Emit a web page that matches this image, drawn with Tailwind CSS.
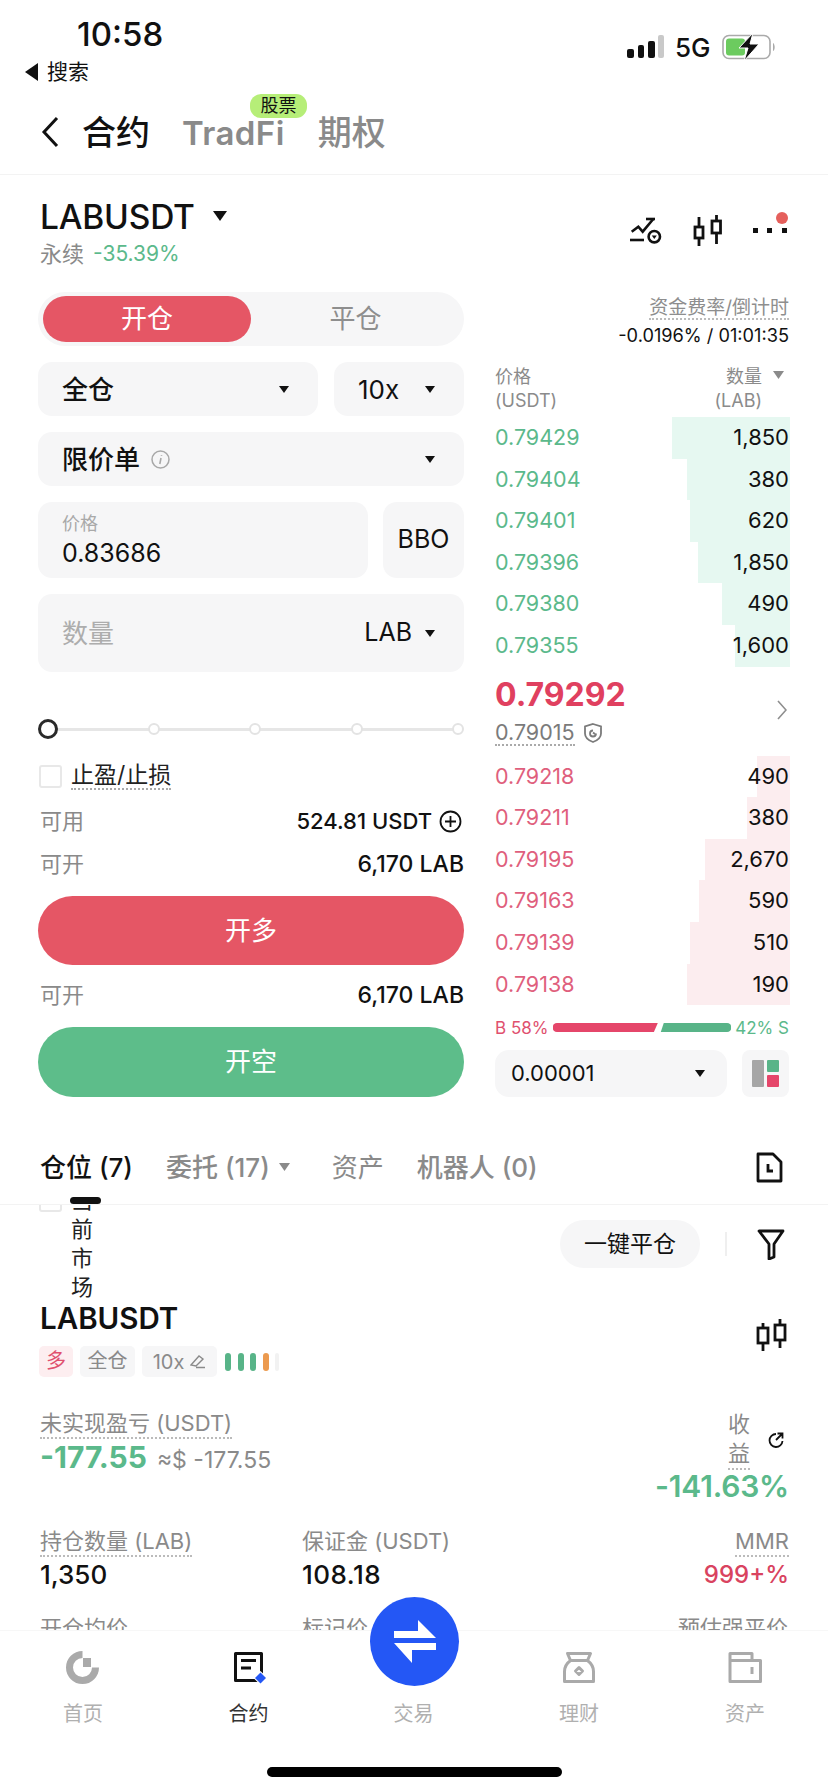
<!DOCTYPE html>
<html lang="zh">
<head>
  <meta charset="UTF-8">
  <title>合约 - LABUSDT</title>
  <script src="https://cdn.jsdelivr.net/npm/@tailwindcss/browser@4"></script>
</head>
<body class="bg-white">
<div class="relative w-[828px] h-[1792px] overflow-hidden bg-white text-[#111] [font-family:Inter,'Noto_Sans_CJK_SC',sans-serif]">

  <!-- Status bar -->
  <div class="relative h-[90px] shrink-0">
    <div class="absolute left-[77px] top-[16px] text-[33px] leading-[36px] font-medium">10:58</div>
    <div class="absolute left-[25px] top-[60px] flex items-center gap-[9px] text-[21px] leading-[24px]">
      <svg class="w-[13px] h-[18px]" viewBox="0 0 13 18"><path d="M13 0v18L0 9z" fill="#111"/></svg>
      <span>搜索</span>
    </div>
    <div class="absolute left-[627px] top-[35px] flex items-end gap-[3.5px] h-[23px]">
      <i class="block w-[7px] h-[9px] rounded-[2px] bg-[#111]"></i>
      <i class="block w-[6.5px] h-[13px] rounded-[2px] bg-[#111]"></i>
      <i class="block w-[7px] h-[17px] rounded-[2px] bg-[#111]"></i>
      <i class="block w-[5.5px] h-[23px] rounded-[2px] bg-[#c9c9c9]"></i>
    </div>
    <div class="absolute left-[675px] top-[32px] text-[26px] leading-[32px] font-medium">5G</div>
    <svg class="absolute left-[722px] top-[33px] w-[54px] h-[28px]" viewBox="0 0 54 28">
      <rect x="1" y="2.5" width="47" height="23" rx="6" fill="none" stroke="#aaa" stroke-width="1.6"/>
      <rect x="4" y="5.5" width="19" height="17" rx="3" fill="#6ccb5f"/>
      <path d="M51 10c2 1 2.500 7 0 8z" fill="#aaa"/>
      <path d="M31 0L17 15h9l-4 13 15-17h-9z" fill="#111" stroke="#fff" stroke-width="1"/>
    </svg>
  </div>

  <!-- Nav -->
  <div class="relative flex items-center h-[85px] pl-[40px] pt-[2px] border-b border-[#f3f3f3]">
    <svg class="w-[20px] h-[34px] mb-[2px]" viewBox="0 0 20 34"><path d="M17 3L4 17l13 14" fill="none" stroke="#111" stroke-width="3"/></svg>
    <span class="ml-[22px] text-[34px] leading-[40px] font-medium">合约</span>
    <span class="relative ml-[32px] text-[33px] leading-[40px] font-semibold tracking-[0.4px] text-[#8a8a8a]">TradFi
      <span class="absolute left-[68px] -top-[19px] w-[57px] h-[24px] rounded-[11px] bg-[#b6ee78] text-[18px] leading-[24px] tracking-normal font-normal text-[#111] text-center">股票</span>
    </span>
    <span class="ml-[33px] text-[34px] leading-[40px] font-medium text-[#8a8a8a]">期权</span>
  </div>

  <!-- Symbol header -->
  <div class="flex justify-between h-[117px] pl-[40px] pr-[40px]">
    <div class="pt-[22px]">
      <div class="flex items-center h-[40px]">
        <span class="text-[33.5px] leading-[40px] font-medium tracking-[-0.2px]">LABUSDT</span>
        <svg class="ml-[18px] w-[14px] h-[10px] mb-[3px]" viewBox="0 0 14 10"><path d="M0 0h14L7 10z" fill="#111"/></svg>
      </div>
      <div class="flex items-center mt-[2px] h-[30px] text-[22px] leading-[30px]">
        <span class="text-[#8a8a8a]">永续</span>
        <span class="ml-[9px] text-[21px] text-[#5bb98b]">-35.39%</span>
      </div>
    </div>
    <div class="relative w-[160px]">
      <svg class="absolute left-[2px] top-[41px] w-[34px] h-[30px]" viewBox="0 0 34 30" fill="none" stroke="#111" stroke-width="2.600">
        <path d="M1.700 15.700l6.600-5 4.400 5L23.300 3"/><path d="M16 3h9"/><path d="M0 24h14"/><circle cx="24.300" cy="20.700" r="5.700"/><path d="M21.800 19.500h5l-2.500 3.500z" fill="#111" stroke="none"/>
      </svg>
      <svg class="absolute left-[64px] top-[39px] w-[30px] h-[32px]" viewBox="0 0 30 32" fill="none" stroke="#111" stroke-width="2.800">
        <rect x="3" y="13" width="8" height="11"/><path d="M7 3v10M7 24v8"/><rect x="20" y="7" width="8.500" height="12"/><path d="M24.500 1v6M24.500 19v11"/>
      </svg>
      <div class="absolute left-[124.500px] top-[53px] flex gap-[9.500px]">
        <i class="block w-[5px] h-[5px] bg-[#111]"></i><i class="block w-[5px] h-[5px] bg-[#111]"></i><i class="block w-[5px] h-[5px] bg-[#111]"></i>
      </div>
      <i class="absolute left-[148px] top-[37px] block w-[12px] h-[12px] rounded-full bg-[#e5605c]"></i>
    </div>
  </div>

  <!-- Trade panel -->
  <div class="flex pl-[38px] gap-[31px]">
    <!-- Order form -->
    <div class="w-[426px]">
      <div class="flex h-[54px] p-[4px] pl-[5px] rounded-[27px] bg-[#f6f6f7] text-[26px]">
        <div class="w-[208px] rounded-[23px] bg-[#e55665] text-white text-center leading-[46px]">开仓</div>
        <div class="flex-1 text-center leading-[46px] text-[#8e8e8e]">平仓</div>
      </div>
      <div class="flex gap-[16px] mt-[16px] h-[54px] text-[26px] font-medium">
        <div class="flex items-center justify-between w-[280px] pl-[24px] pr-[29px] rounded-[14px] bg-[#f6f6f7]">
          <span>全仓</span>
          <svg class="w-[10px] h-[7px]" viewBox="0 0 10 7"><path d="M0 0h10L5 7z" fill="#111"/></svg>
        </div>
        <div class="flex items-center justify-between flex-1 pl-[24px] pr-[29px] rounded-[14px] bg-[#f6f6f7]">
          <span class="font-normal">10x</span>
          <svg class="w-[10px] h-[7px]" viewBox="0 0 10 7"><path d="M0 0h10L5 7z" fill="#111"/></svg>
        </div>
      </div>
      <div class="flex items-center justify-between mt-[16px] h-[54px] pl-[24px] pr-[29px] rounded-[14px] bg-[#f6f6f7] text-[26px]">
        <div class="flex items-center gap-[11px]">
          <span class="font-medium">限价单</span>
          <svg class="w-[19px] h-[19px]" viewBox="0 0 19 19" fill="none"><circle cx="9.500" cy="9.500" r="8.500" stroke="#a8a8a8" stroke-width="1.500"/><path d="M10.500 5v.8M10 8l-1.200 6" stroke="#a8a8a8" stroke-width="1.600"/></svg>
        </div>
        <svg class="w-[10px] h-[7px]" viewBox="0 0 10 7"><path d="M0 0h10L5 7z" fill="#111"/></svg>
      </div>
      <div class="flex gap-[15px] mt-[16px] h-[76px]">
        <div class="flex-1 pl-[24px] pt-[10px] rounded-[14px] bg-[#f6f6f7]">
          <div class="text-[18px] leading-[24px] text-[#a9a9a9]">价格</div>
          <div class="mt-[1px] text-[25px] leading-[32px]">0.83686</div>
        </div>
        <div class="flex items-center justify-center w-[81px] rounded-[14px] bg-[#f6f6f7] text-[25px]">BBO</div>
      </div>
      <div class="flex items-center justify-between mt-[16px] h-[78px] pl-[24px] pr-[29px] rounded-[14px] bg-[#f6f6f7] text-[26px]">
        <span class="text-[#adadad]">数量</span>
        <div class="flex items-center gap-[13px]">
          <span class="text-[25px]">LAB</span>
          <svg class="w-[10px] h-[7px]" viewBox="0 0 10 7"><path d="M0 0h10L5 7z" fill="#111"/></svg>
        </div>
      </div>
      <!-- Leverage slider -->
      <div class="relative flex items-center justify-between mt-[47px] h-[20px]">
        <div class="absolute left-[10px] right-[4px] top-[8.500px] h-[3px] bg-[#e6e6e6]"></div>
        <i class="relative block w-[20px] h-[20px] rounded-full border-[3.500px] border-[#2a2a2a] bg-white"></i>
        <i class="relative block w-[12px] h-[12px] rounded-full border-2 border-[#e3e3e3] bg-white"></i>
        <i class="relative block w-[12px] h-[12px] rounded-full border-2 border-[#e3e3e3] bg-white"></i>
        <i class="relative block w-[12px] h-[12px] rounded-full border-2 border-[#e3e3e3] bg-white"></i>
        <i class="relative block w-[12px] h-[12px] rounded-full border-2 border-[#e3e3e3] bg-white"></i>
      </div>
      <div class="flex items-center gap-[9px] mt-[24px] h-[26px] pl-[1px]">
        <i class="block w-[23px] h-[23px] rounded-[3px] border-2 border-[#e8e8e8]"></i>
        <span class="text-[23px] leading-[26px] text-[#222] border-b-2 border-dotted border-[#aaa]">止盈/止损</span>
      </div>
      <div class="flex items-center justify-between mt-[18px] h-[28px] text-[22px]">
        <span class="text-[#8a8a8a] pl-[2px]">可用</span>
        <div class="flex items-center gap-[7px] font-medium">
          <span>524.81 USDT</span>
          <svg class="w-[23px] h-[23px] mr-[2px]" viewBox="0 0 23 23" fill="none" stroke="#111" stroke-width="1.800"><circle cx="11.500" cy="11.500" r="10"/><path d="M11.500 6v11M6 11.500h11"/></svg>
        </div>
      </div>
      <div class="flex items-center justify-between mt-[15px] h-[28px] text-[22px]">
        <span class="text-[#8a8a8a] pl-[2px]">可开</span>
        <span class="font-medium text-[23px]">6,170 LAB</span>
      </div>
      <div class="mt-[18px] h-[69px] rounded-[35px] bg-[#e55665] text-white text-center text-[26px] leading-[69px]">开多</div>
      <div class="flex items-center justify-between mt-[16px] h-[28px] text-[22px]">
        <span class="text-[#8a8a8a] pl-[2px]">可开</span>
        <span class="font-medium text-[23px]">6,170 LAB</span>
      </div>
      <div class="mt-[18px] h-[70px] rounded-[35px] bg-[#5dbd8a] text-white text-center text-[26px] leading-[70px]">开空</div>
    </div>

    <!-- Order book -->
    <div class="w-[294px]">
      <div class="flex flex-col items-end pt-[5px]">
        <span class="text-[19px] leading-[21px] text-[#8e8e8e] border-b-2 border-dotted border-[#bbb]">资金费率/倒计时</span>
        <span class="mt-[5px] text-[18.200px] leading-[20px]">-0.0196% / 01:01:35</span>
      </div>
      <div class="flex justify-between mt-[20px] h-[52px] text-[#8b8b8b] text-[18px] leading-[24px]">
        <div>价格<br>(USDT)</div>
        <div class="flex">
          <div class="text-right">数量<br>(LAB)</div>
          <svg class="w-[11px] h-[8px] mt-[6px] ml-[11px] mr-[5px]" viewBox="0 0 11 8"><path d="M0 0h11L5.500 8z" fill="#8b8b8b"/></svg>
        </div>
      </div>
      <div class="text-[21.500px] leading-[41.600px]">
        <div class="relative flex justify-between h-[41.600px] text-[#5bb98b]"><i class="absolute -right-[1px] inset-y-0 w-[118px] bg-[#e6f8f1]"></i><span class="relative">0.79429</span><span class="relative text-[22px] text-[#111]">1,850</span></div>
        <div class="relative flex justify-between h-[41.600px] text-[#5bb98b]"><i class="absolute -right-[1px] inset-y-0 w-[103px] bg-[#e6f8f1]"></i><span class="relative">0.79404</span><span class="relative text-[22px] text-[#111]">380</span></div>
        <div class="relative flex justify-between h-[41.600px] text-[#5bb98b]"><i class="absolute -right-[1px] inset-y-0 w-[100px] bg-[#e6f8f1]"></i><span class="relative">0.79401</span><span class="relative text-[22px] text-[#111]">620</span></div>
        <div class="relative flex justify-between h-[41.600px] text-[#5bb98b]"><i class="absolute -right-[1px] inset-y-0 w-[92px] bg-[#e6f8f1]"></i><span class="relative">0.79396</span><span class="relative text-[22px] text-[#111]">1,850</span></div>
        <div class="relative flex justify-between h-[41.600px] text-[#5bb98b]"><i class="absolute -right-[1px] inset-y-0 w-[68px] bg-[#e6f8f1]"></i><span class="relative">0.79380</span><span class="relative text-[22px] text-[#111]">490</span></div>
        <div class="relative flex justify-between h-[41.600px] text-[#5bb98b]"><i class="absolute -right-[1px] inset-y-0 w-[55px] bg-[#e6f8f1]"></i><span class="relative">0.79355</span><span class="relative text-[22px] text-[#111]">1,600</span></div>
      </div>
      <div class="flex items-center justify-between h-[89px]">
        <div>
          <div class="text-[32px] leading-[38px] font-bold text-[#e0405f]">0.79292</div>
          <div class="flex items-center gap-[9px] mt-[6px]">
            <span class="text-[21.500px] leading-[24px] text-[#7b7b7b] border-b-2 border-dotted border-[#aaa]">0.79015</span>
            <svg class="w-[18px] h-[20px]" viewBox="0 0 18 20" fill="none" stroke="#7b7b7b" stroke-width="1.800"><path d="M9 1l8 2.500v7c0 4-4 7-8 8.500-4-1.500-8-4.500-8-8.500v-7z"/><path d="M12 10.500a3 3 0 1 1-3-3M9 9.500l2 1.500"/></svg>
          </div>
        </div>
        <svg class="w-[10px] h-[20px] mr-[2px] mb-[2px]" viewBox="0 0 10 20"><path d="M1 1l8 9-8 9" fill="none" stroke="#8e8e8e" stroke-width="1.600"/></svg>
      </div>
      <div class="text-[21.500px] leading-[41.600px]">
        <div class="relative flex justify-between h-[41.600px] text-[#df5f7d]"><i class="absolute -right-[1px] inset-y-0 w-[33px] bg-[#fcedef]"></i><span class="relative">0.79218</span><span class="relative text-[22px] text-[#111]">490</span></div>
        <div class="relative flex justify-between h-[41.600px] text-[#df5f7d]"><i class="absolute -right-[1px] inset-y-0 w-[43px] bg-[#fcedef]"></i><span class="relative">0.79211</span><span class="relative text-[22px] text-[#111]">380</span></div>
        <div class="relative flex justify-between h-[41.600px] text-[#df5f7d]"><i class="absolute -right-[1px] inset-y-0 w-[85px] bg-[#fcedef]"></i><span class="relative">0.79195</span><span class="relative text-[22px] text-[#111]">2,670</span></div>
        <div class="relative flex justify-between h-[41.600px] text-[#df5f7d]"><i class="absolute -right-[1px] inset-y-0 w-[91px] bg-[#fcedef]"></i><span class="relative">0.79163</span><span class="relative text-[22px] text-[#111]">590</span></div>
        <div class="relative flex justify-between h-[41.600px] text-[#df5f7d]"><i class="absolute -right-[1px] inset-y-0 w-[100px] bg-[#fcedef]"></i><span class="relative">0.79139</span><span class="relative text-[22px] text-[#111]">510</span></div>
        <div class="relative flex justify-between h-[41.600px] text-[#df5f7d]"><i class="absolute -right-[1px] inset-y-0 w-[103px] bg-[#fcedef]"></i><span class="relative">0.79138</span><span class="relative text-[22px] text-[#111]">190</span></div>
      </div>
      <div class="flex items-center justify-between mt-[11px] h-[24px] text-[17px] leading-[24px]">
        <span class="text-[#e0506e]">B 58%</span>
        <svg class="w-[178px] h-[10px]" viewBox="0 0 180 10" preserveAspectRatio="none"><path d="M4 0h102l-4 9H4a4.500 4.500 0 0 1 0-9z" fill="#e5466a"/><path d="M112 0h64a4.500 4.500 0 0 1 0 9h-67z" fill="#58b488"/></svg>
        <span class="text-[#5bb98b]">42% S</span>
      </div>
      <div class="flex gap-[15px] mt-[10px] h-[47px]">
        <div class="flex items-center justify-between w-[232px] pl-[16px] pr-[22px] rounded-[14px] bg-[#f6f6f7] text-[22px]">
          <span>0.00001</span>
          <svg class="w-[10px] h-[7px]" viewBox="0 0 10 7"><path d="M0 0h10L5 7z" fill="#111"/></svg>
        </div>
        <div class="flex-1 flex items-center justify-center rounded-[8px] bg-[#f6f6f7]">
          <svg class="w-[27px] h-[27px]" viewBox="0 0 27 27"><rect width="12" height="27" rx="1" fill="#a6a6a6"/><rect x="15" width="12" height="12" rx="1" fill="#58b488"/><rect x="15" y="15" width="12" height="12" rx="1" fill="#e5466a"/></svg>
        </div>
      </div>
    </div>
  </div>

  <!-- Position tabs -->
  <div class="relative flex items-center mt-[33px] h-[75px] pl-[40px] pr-[45px] border-b border-[#f3f3f3] text-[26px]">
    <span class="font-medium">仓位 (7)</span>
    <span class="ml-[33px] font-medium text-[#8a8a8a]">委托 (17)</span>
    <svg class="ml-[9px] w-[11px] h-[8px]" viewBox="0 0 11 8"><path d="M0 0h11L5.500 8z" fill="#8a8a8a"/></svg>
    <span class="ml-[42px] text-[#8a8a8a]">资产</span>
    <span class="ml-[33px] font-medium text-[#8a8a8a]">机器人 (0)</span>
    <svg class="ml-auto w-[27px] h-[31px]" viewBox="0 0 27 31" fill="none" stroke="#111" stroke-width="2.800"><path d="M2 2h15l8 8v19H2z" stroke-linejoin="round"/><path d="M12 12v7h5"/></svg>
    <i class="absolute left-[70px] -bottom-[0px] block w-[31px] h-[7px] rounded-full bg-[#111]"></i>
  </div>

  <!-- Positions (scrolled under the tabs) -->
  <div class="h-[425px] overflow-hidden px-[40px]">
    <div class="-mt-[19px]">
      <div class="flex items-start h-[117px]">
        <i class="block w-[23px] h-[23px] mt-[3px] -ml-[1px] rounded-[3px] border-2 border-[#e8e8e8]"></i>
        <span class="ml-[9px] w-[22px] text-[22px] leading-[29px] text-[#222]">当前市场</span>
        <div class="ml-auto flex items-center mt-[34px]">
          <div class="w-[140px] h-[48px] rounded-[24px] bg-[#f6f6f7] text-center text-[23px] leading-[48px]">一键平仓</div>
          <i class="block ml-[25px] w-[2px] h-[24px] bg-[#efefef]"></i>
          <svg class="ml-[30px] mr-[3px] w-[28px] h-[31px]" viewBox="0 0 28 31" fill="none" stroke="#111" stroke-width="2.800" stroke-linejoin="round"><path d="M2 2h24l-9 13v13l-5 2V15z"/></svg>
        </div>
      </div>
      <div class="flex items-start justify-between h-[44px]">
        <span class="text-[29.500px] leading-[30px] font-semibold">LABUSDT</span>
        <svg class="w-[31px] h-[33px] mt-[16px] mr-[1px]" viewBox="0 0 31 33" fill="none" stroke="#111" stroke-width="2.800"><rect x="2" y="9" width="10" height="15"/><path d="M7 4v5M7 24v8"/><rect x="19" y="6" width="10" height="15"/><path d="M24 0v6M24 21v8"/></svg>
      </div>
      <div class="flex items-center gap-[7px] h-[31px] -ml-[1px] -mt-[1px] text-[20px]">
        <span class="w-[34px] h-[31px] rounded-[5px] bg-[#fdeef0] text-center leading-[31px] text-[#e0506e]">多</span>
        <span class="w-[55px] h-[31px] rounded-[5px] bg-[#f6f6f7] text-center leading-[31px] text-[#8a8a8a]">全仓</span>
        <span class="flex items-center justify-center gap-[6px] w-[75px] h-[31px] rounded-[5px] bg-[#f6f6f7] text-[#8a8a8a]">10x
          <svg class="w-[16px] h-[15px]" viewBox="0 0 16 15" fill="none" stroke="#8a8a8a" stroke-width="1.400"><path d="M1 11l8-9 4 3-7 7zM6 13.500h9"/></svg>
        </span>
        <div class="flex gap-[6.500px] ml-[1px] items-center">
          <i class="block w-[6px] h-[18px] rounded-full bg-[#58b488]"></i>
          <i class="block w-[6px] h-[18px] rounded-full bg-[#58b488]"></i>
          <i class="block w-[6px] h-[18px] rounded-full bg-[#58b488]"></i>
          <i class="block w-[6px] h-[18px] rounded-full bg-[#ec9a4f]"></i>
          <i class="block w-[4px] h-[18px] rounded-full bg-[#f2f2f2]"></i>
        </div>
      </div>
      <div class="flex justify-between mt-[33px] h-[118px]">
        <div>
          <span class="inline-block text-[22px] leading-[27px] text-[#8a8a8a] border-b-2 border-dotted border-[#bbb]">未实现盈亏 (USDT)</span>
          <div class="flex items-baseline gap-[10px]">
            <span class="text-[30px] leading-[36px] font-bold text-[#5bb98b]">-177.55</span>
            <span class="text-[23px] text-[#8a8a8a]">≈$ -177.55</span>
          </div>
        </div>
        <div class="flex flex-col items-end -mr-[1px]">
          <div class="flex items-center">
            <span class="w-[22px] text-[22px] leading-[29px] text-[#8a8a8a] border-b-2 border-dotted border-[#bbb]">收益</span>
            <svg class="ml-[17px] w-[18px] h-[18px] mr-[4px]" viewBox="0 0 18 18" fill="none" stroke="#111" stroke-width="1.800"><path d="M9 3A6.500 6.500 0 1 0 15.500 10"/><path d="M9 9l6-6M10.500 2.500h5v5"/></svg>
          </div>
          <span class="-mt-[1px] text-[30px] leading-[34px] font-semibold tracking-[-0.2px] text-[#5bb98b]">-141.63%</span>
        </div>
      </div>
      <div class="grid grid-cols-[262px_1fr_auto] h-[87px]">
        <div>
          <span class="inline-block text-[22px] leading-[27px] text-[#8a8a8a] border-b-2 border-dotted border-[#bbb]">持仓数量 (LAB)</span>
          <div class="mt-[3px] text-[26px] leading-[30px] font-medium">1,350</div>
        </div>
        <div>
          <span class="inline-block text-[22px] leading-[27px] text-[#8a8a8a]">保证金 (USDT)</span>
          <div class="mt-[5px] text-[26px] leading-[30px] font-medium tracking-[0.5px]">108.18</div>
        </div>
        <div class="text-right -mr-[1px]">
          <span class="inline-block text-[22px] leading-[27px] text-[#8a8a8a] border-b-2 border-dotted border-[#bbb]">MMR</span>
          <div class="mt-[3px] text-[24px] leading-[30px] font-medium text-[#d9435f]">999+%</div>
        </div>
      </div>
      <div class="grid grid-cols-[262px_1fr_auto] text-[22px] leading-[27px] text-[#8a8a8a]">
        <span>开仓均价</span><span>标记价</span><span>预估强平价</span>
      </div>
    </div>
  </div>

  <!-- Bottom tabs -->
  <div class="relative flex h-[162px] pt-[20px] bg-white border-t border-[#f7f7f7] text-[20px] leading-[24px] text-[#b0b0b0]">
    <div class="flex flex-col items-center w-[166px]">
      <svg class="w-[34px] h-[33px]" viewBox="0 0 34 33" fill="none"><path d="M16.500 3.500A13 13 0 1 0 29.500 16.500" stroke="#aaa" stroke-width="7"/><path d="M17 7h8v9h-8z" fill="#aaa"/></svg>
      <span class="mt-[18px]">首页</span>
    </div>
    <div class="flex flex-col items-center w-[165px] text-[#333]">
      <svg class="w-[34px] h-[33px]" viewBox="0 0 34 33" fill="none"><path d="M3.500 2.500h26v27h-26z" stroke="#111" stroke-width="3" stroke-linejoin="round"/><path d="M9 9.500h15M9 17h10" stroke="#111" stroke-width="3"/><path d="M28.500 20l7 7-7 7-7-7z" fill="#fff"/><path d="M28.500 21.500l5.500 5.500-5.500 5.500-5.500-5.500z" fill="#2457f5"/></svg>
      <span class="mt-[18px]">合约</span>
    </div>
    <div class="flex flex-col items-center w-[165px]">
      <div class="h-[33px]"></div>
      <span class="mt-[18px]">交易</span>
    </div>
    <div class="flex flex-col items-center w-[166px]">
      <svg class="w-[32px] h-[33px]" viewBox="0 0 32 33" fill="none" stroke="#aaa" stroke-width="3" stroke-linejoin="round"><path d="M4.500 2.500h23l-3 7c4 3 6 7 6 11v10h-29v-10c0-4 2-8 6-11z"/><path d="M8 9.500h16"/><path d="M16 16.500l3.500 3.500-3.500 3.500-3.500-3.500z"/></svg>
      <span class="mt-[18px]">理财</span>
    </div>
    <div class="flex flex-col items-center w-[166px]">
      <svg class="w-[34px] h-[33px]" viewBox="0 0 34 33" fill="none" stroke="#aaa" stroke-width="3" stroke-linejoin="round"><path d="M2 2.500h22v7h8.500v21H2z"/><path d="M2 9.500h22"/><path d="M24 16v7"/></svg>
      <span class="mt-[18px]">资产</span>
    </div>
  </div>

  <!-- Floating trade button -->
  <div class="absolute left-[370px] top-[1597px] flex items-center justify-center w-[89px] h-[89px] rounded-full bg-[#2457f5]">
    <svg class="w-[44px] h-[44px]" viewBox="0 0 44 44"><path d="M1 11h24V0l18 18H1z" fill="#fff"/><path d="M1 23h42v7H19v13z" fill="#fff"/></svg>
  </div>

  <!-- Home indicator -->
  <div class="absolute left-[267px] top-[1767px] w-[295px] h-[10px] rounded-full bg-black"></div>
</div>
</body>
</html>
